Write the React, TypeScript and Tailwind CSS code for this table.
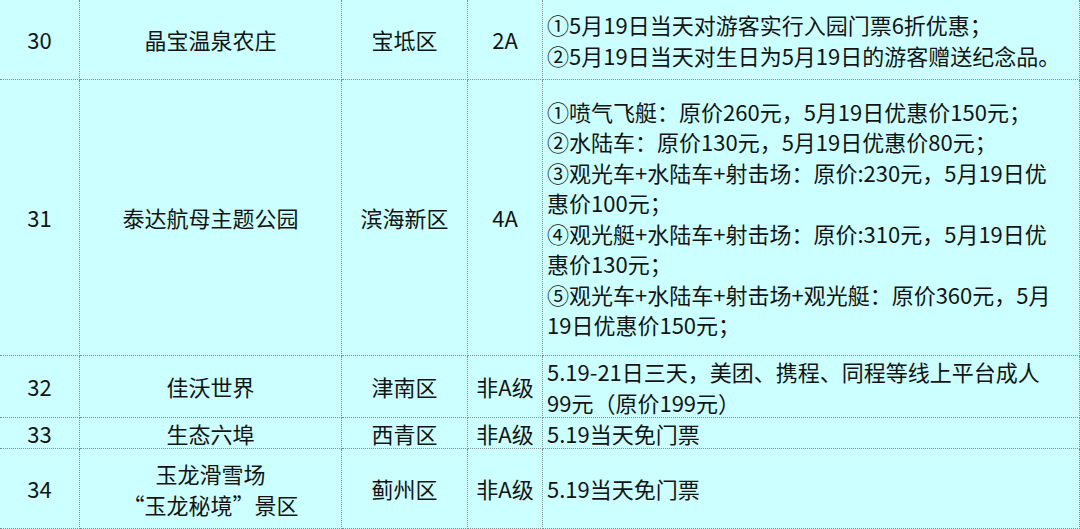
const rows = [
  {
    no: "30",
    name: ["晶宝温泉农庄"],
    area: "宝坻区",
    level: "2A",
    h: "h-[80px]",
    text: ["①5月19日当天对游客实行入园门票6折优惠；", "②5月19日当天对生日为5月19日的游客赠送纪念品。"],
  },
  {
    no: "31",
    name: ["泰达航母主题公园"],
    area: "滨海新区",
    level: "4A",
    h: "h-[276px]",
    text: [
      "①喷气飞艇：原价260元，5月19日优惠价150元；",
      "②水陆车：原价130元，5月19日优惠价80元；",
      "③观光车+水陆车+射击场：原价:230元，5月19日优",
      "惠价100元；",
      "④观光艇+水陆车+射击场：原价:310元，5月19日优",
      "惠价130元；",
      "⑤观光车+水陆车+射击场+观光艇：原价360元，5月",
      "19日优惠价150元；",
    ],
  },
  {
    no: "32",
    name: ["佳沃世界"],
    area: "津南区",
    level: "非A级",
    h: "h-[62px]",
    text: ["5.19-21日三天，美团、携程、同程等线上平台成人", "99元（原价199元）"],
  },
  {
    no: "33",
    name: ["生态六埠"],
    area: "西青区",
    level: "非A级",
    h: "h-[31px]",
    text: ["5.19当天免门票"],
  },
  {
    no: "34",
    name: ["玉龙滑雪场", "“玉龙秘境”景区"],
    area: "蓟州区",
    level: "非A级",
    h: "h-[80px]",
    text: ["5.19当天免门票"],
  },
];

const cell =
  "flex items-center border-r border-b border-dotted border-[#7d8f91] h-full";

export default function App() {
  return (
    <div
      className="w-[1080px] h-[529px] overflow-hidden bg-[#ccffff] text-[#141414] text-[22px] leading-[30.5px]"
      style={{ fontFamily: '"Noto Sans CJK SC", "Noto Sans", sans-serif' }}
    >
      {rows.map((r) => (
        <div key={r.no} className={`flex ${r.h}`}>
          <div className={`${cell} w-[80px] justify-center`}>{r.no}</div>
          <div className={`${cell} w-[262px] flex-col justify-center text-center`}>
            {r.name.map((n) => (
              <div key={n}>{n}</div>
            ))}
          </div>
          <div className={`${cell} w-[126px] justify-center`}>{r.area}</div>
          <div className={`${cell} w-[75px] justify-center whitespace-nowrap`}>{r.level}</div>
          <div className={`${cell} w-[537px] flex-col !items-start justify-center pl-[4px]`}>
            {r.text.map((t) => (
              <div key={t} className="whitespace-nowrap">
                {t}
              </div>
            ))}
          </div>
        </div>
      ))}
    </div>
  );
}
